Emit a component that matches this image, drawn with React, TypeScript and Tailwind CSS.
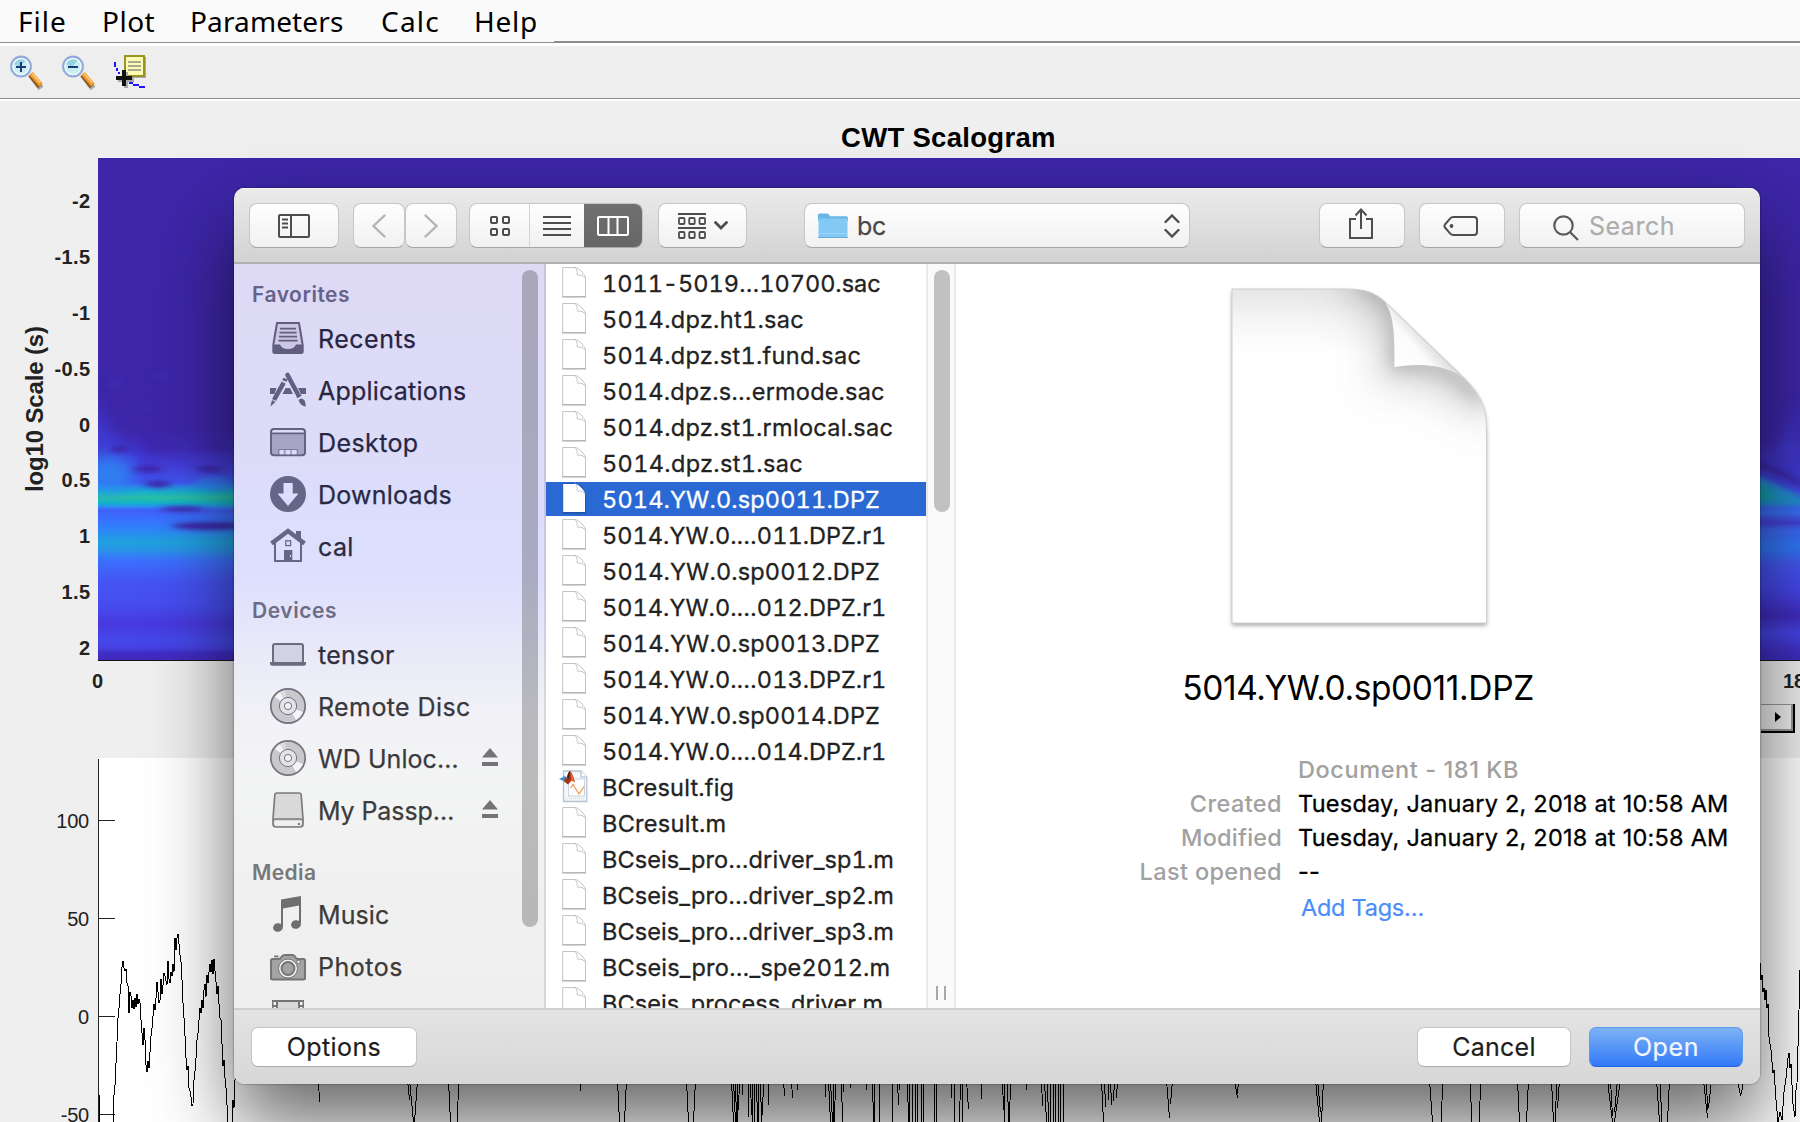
import React from 'react';

/* ---------- figure window (background) ---------- */

const menus = [
  { label: 'File', cls: 'w-[84px] tracking-[1px]' },
  { label: 'Plot', cls: 'w-[88px] tracking-[0.5px]' },
  { label: 'Parameters', cls: 'w-[191px] tracking-[0.13px]' },
  { label: 'Calc', cls: 'w-[93px] tracking-[1.2px]' },
  { label: 'Help', cls: 'tracking-[0.75px]' },
];

function Magnifier({ plus }: { plus?: boolean }) {
  return (
    <svg width="34" height="38" viewBox="0 0 34 38">
      <path d="M21 20 L31 33.500" stroke="#a9a9b5" strokeWidth="6" />
      <path d="M20.500 19.500 L30 31.500" stroke="#8a5a20" strokeWidth="5.500" />
      <path d="M21 18.500 L31 30" stroke="#f39a2c" strokeWidth="4.500" />
      <path d="M22 18.500 L30 27.500" stroke="#fbc980" strokeWidth="1.500" />
      <circle cx="11" cy="11.500" r="9.800" fill="#c9edf3" stroke="#93a9dc" strokeWidth="2.200" />
      <path d="M4 9 A8 8 0 0 1 16 5 L10 12 Z" fill="#93d3e2" />
      <circle cx="11" cy="11.500" r="8" fill="none" stroke="#ecfafc" strokeWidth="1.400" />
      <path d="M6 12 H16" stroke="#1c3a78" strokeWidth="2" />
      {plus && <path d="M11 7 V17" stroke="#1c3a78" strokeWidth="2" />}
    </svg>
  );
}

function DataCursor() {
  return (
    <svg width="34" height="38" viewBox="0 0 34 38" shapeRendering="crispEdges">
      <path d="M12 2 H32 V23 H12 Z" fill="#a9a9b0" />
      <path d="M1 7 V12 M3 13 V16 M5 17 V19" stroke="#1616ff" strokeWidth="2" />
      <path d="M15 28 H19 M19 30 H25 M25 32 H31" stroke="#1616ff" strokeWidth="2" />
      <rect x="11" y="1" width="19" height="20" fill="#fbfbb4" stroke="#9a9222" strokeWidth="2" />
      <path d="M14 6.500 H27 M14 10.500 H27 M14 14.500 H27" stroke="#a9a990" strokeWidth="2" />
      <path d="M4 25 H20 M12 17 V33" stroke="#aaa" strokeWidth="4" />
      <path d="M2 23 H18 M10 15 V31" stroke="#111" strokeWidth="4" />
    </svg>
  );
}

const yTicks: [string, number][] = [
  ['-2', 201], ['-1.5', 257], ['-1', 313], ['-0.5', 369], ['0', 425],
  ['0.5', 480], ['1', 536], ['1.5', 592], ['2', 648],
];

function Scalogram() {
  return (
    <svg className="block" width="1800" height="603" viewBox="0 101 1800 603" fontFamily='"Liberation Sans", Arial, sans-serif' fontWeight="700">
      <defs>
        <linearGradient id="spectrum" x1="0" y1="158" x2="0" y2="661" gradientUnits="userSpaceOnUse">
          <stop offset="0" stopColor="#3d26a8" />
          <stop offset="0.540" stopColor="#3d26a8" />
          <stop offset="0.580" stopColor="#3f2cba" />
          <stop offset="0.615" stopColor="#4440dc" />
          <stop offset="0.645" stopColor="#3f58f2" />
          <stop offset="0.654" stopColor="#2a8ce8" />
          <stop offset="0.664" stopColor="#18b0cc" />
          <stop offset="0.675" stopColor="#2abfa6" />
          <stop offset="0.686" stopColor="#14b4c8" />
          <stop offset="0.693" stopColor="#2a90f0" />
          <stop offset="0.700" stopColor="#4060f8" />
          <stop offset="0.720" stopColor="#3872ff" />
          <stop offset="0.740" stopColor="#2e86f8" />
          <stop offset="0.763" stopColor="#1fa2dd" />
          <stop offset="0.780" stopColor="#2993e8" />
          <stop offset="0.800" stopColor="#3a70fc" />
          <stop offset="0.840" stopColor="#4455f4" />
          <stop offset="0.890" stopColor="#464cee" />
          <stop offset="0.925" stopColor="#4739de" />
          <stop offset="0.960" stopColor="#4548ea" />
          <stop offset="0.975" stopColor="#453fe0" />
          <stop offset="0.985" stopColor="#402cc4" />
          <stop offset="1" stopColor="#4029bc" />
        </linearGradient>
        <linearGradient id="spectrumRight" x1="0" y1="158" x2="0" y2="661" gradientUnits="userSpaceOnUse">
          <stop offset="0" stopColor="#3d26a8" />
          <stop offset="0.560" stopColor="#3d26a8" />
          <stop offset="0.620" stopColor="#4136cc" />
          <stop offset="0.680" stopColor="#3f50f0" />
          <stop offset="0.705" stopColor="#3970f6" />
          <stop offset="0.725" stopColor="#4440d6" />
          <stop offset="0.740" stopColor="#3b68f4" />
          <stop offset="0.775" stopColor="#3078f8" />
          <stop offset="0.810" stopColor="#4455f0" />
          <stop offset="0.860" stopColor="#4545e8" />
          <stop offset="0.910" stopColor="#402bbe" />
          <stop offset="0.945" stopColor="#4644e6" />
          <stop offset="0.980" stopColor="#402fc4" />
          <stop offset="1" stopColor="#3f2bbc" />
        </linearGradient>
        <filter id="b3" x="-60%" y="-100%" width="220%" height="300%"><feGaussianBlur stdDeviation="5 2.200" /></filter>
        <filter id="b8" x="-60%" y="-60%" width="220%" height="220%"><feGaussianBlur stdDeviation="8" /></filter>
        <clipPath id="plotArea"><rect x="98" y="158" width="1702" height="502" /></clipPath>
      </defs>
      <text x="841" y="147" fontSize="27.500" letterSpacing="0.300">CWT Scalogram</text>
      <text transform="translate(42.500 492) rotate(-90)" fontSize="24" letterSpacing="-0.150" fill="#222">log10 Scale (s)</text>
      <g fontSize="20" textAnchor="end" fill="#222" letterSpacing="0.400">
        {yTicks.map(([t, y]) => <text key={t} x="90.500" y={y + 7}>{t}</text>)}
      </g>
      <text x="97.500" y="688" fontSize="20" textAnchor="middle" fill="#222">0</text>
      <text x="1783" y="688" fontSize="20" fill="#222">180</text>
      <g clipPath="url(#plotArea)">
        <rect x="98" y="158" width="902" height="502" fill="url(#spectrum)" />
        <rect x="1000" y="158" width="800" height="502" fill="url(#spectrumRight)" />
        <path d="M90 390 Q105 440 140 452 V475 H90 Z" fill="#4048ee" opacity="0.600" filter="url(#b8)" />
        <ellipse cx="108" cy="474" rx="26" ry="18" fill="#2b8cf2" opacity="0.800" filter="url(#b8)" />
        <ellipse cx="215" cy="484" rx="20" ry="7" fill="#2b86f0" opacity="0.600" filter="url(#b3)" />
        <g fill="#3e26a8" filter="url(#b3)">
          <ellipse cx="120" cy="449" rx="9" ry="4" />
          <ellipse cx="162" cy="447" rx="12" ry="4" />
          <ellipse cx="212" cy="446" rx="12" ry="4" />
          <ellipse cx="148" cy="469" rx="14" ry="3.500" />
          <ellipse cx="210" cy="469" rx="14" ry="3.500" />
          <ellipse cx="158" cy="484" rx="13" ry="3.500" />
          <ellipse cx="182" cy="509" rx="22" ry="2.500" />
          <ellipse cx="208" cy="526" rx="36" ry="4" />
        </g>
        <path d="M1745 470 Q1765 480 1805 498 V506 H1745 Z" fill="#228fd0" filter="url(#b3)" />
        <path d="M1750 482 Q1768 488 1776 494 V500 H1750 Z" fill="#189fb0" filter="url(#b3)" />
        <path d="M1785 440 L1800 400 V470 L1770 452 Z" fill="#4140dc" opacity="0.700" filter="url(#b8)" />
        <path d="M1752 462 Q1775 468 1804 486" stroke="#3a25a4" strokeWidth="6" fill="none" filter="url(#b3)" />
        <g fill="#4133c0" opacity="0.500" filter="url(#b3)">
          <ellipse cx="116" cy="383" rx="4" ry="7" />
          <ellipse cx="162" cy="376" rx="5" ry="4" />
          <ellipse cx="146" cy="407" rx="3" ry="5" />
        </g>
      </g>
      <rect x="98" y="660" width="1702" height="1" fill="#151515" />
    </svg>
  );
}

const leftTrace =
  '99,1095 100,1122 113,1122 114,1095 115,1085 117,1042 118,1018 119,1008 120,994 121,984 122,967 123,961 124,968 125,971 126,969 127,983 128,986 129,1013 130,992 131,996 132,1008 133,1000 134,1009 135,998 136,1007 137,994 138,1004 139,999 140,1003 141,1020 142,1033 143,1045 144,1028 145,1040 146,1065 147,1072 148,1061 149,1068 150,1052 151,1036 152,1028 153,1016 154,1004 155,1010 156,998 157,982 158,992 159,1003 160,1000 161,979 162,994 163,985 164,973 165,976 166,981 167,985 168,961 169,979 170,983 171,972 172,976 173,964 174,972 175,938 176,950 177,938 178,934 179,944 180,955 181,962 182,980 183,1003 184,1018 185,1036 186,1058 187,1070 188,1066 189,1088 190,1091 191,1097 192,1106 193,1104 194,1080 195,1071 196,1058 197,1040 198,1033 199,1020 200,1008 201,1013 202,1000 203,1008 204,990 205,984 206,997 207,975 208,983 209,972 210,964 211,972 212,960 213,974 214,959 215,971 216,982 217,994 218,986 219,1004 220,1018 221,1020 222,1044 223,1066 224,1060 225,1078 226,1088 227,1105 228,1122 232,1122 233,1100 234,1108 235,1080 236,1060';

const rightTrace =
  '1760,963 1761,980 1762,975 1763,992 1764,988 1765,1000 1766,990 1767,1008 1768,1004 1769,1037 1771,1050 1773,1073 1774,1070 1776,1100 1778,1122 1780,1112 1782,1120 1784,1092 1786,1078 1788,1058 1789,1053 1790,1068 1791,1064 1792,1085 1793,1104 1795,1117 1796,1090 1797,1083 1799,1010 1800,970';

/* [x at the top edge, x at the bottom end, bottom y] of each visible excursion */
const spikes: [number, number, number][] = [
  [318, 319, 1102], [407, 409, 1100], [409, 413, 1122], [417, 414, 1122], [448, 450, 1122], [458, 457, 1122],
  [580, 580, 1091], [617, 619, 1122], [626, 624, 1122], [686, 688, 1122], [695, 693, 1122],
  [731, 733, 1122], [733, 735, 1122], [735, 736, 1122], [737, 737, 1122], [739, 738, 1110], [742, 742, 1095], [748, 748, 1117],
  [750, 751, 1115], [752, 752, 1122], [754, 754, 1122], [756, 757, 1122], [758, 758, 1122], [760, 761, 1122], [763, 762, 1115],
  [768, 768, 1105], [783, 784, 1096], [791, 792, 1098], [797, 797, 1090], [825, 825, 1097], [828, 830, 1122], [830, 832, 1122], [833, 833, 1122], [835, 834, 1122],
  [841, 842, 1122], [843, 843, 1092], [850, 850, 1088], [866, 866, 1090], [872, 873, 1122], [874, 874, 1122], [879, 879, 1122], [892, 892, 1122], [897, 898, 1105],
  [899, 899, 1090], [907, 908, 1122], [909, 909, 1122], [912, 912, 1122], [915, 915, 1122], [917, 917, 1122], [921, 921, 1122], [923, 923, 1122],
  [934, 934, 1122], [936, 936, 1122], [951, 951, 1098], [954, 954, 1122], [960, 959, 1122], [962, 962, 1122], [966, 968, 1109], [981, 981, 1099],
  [1002, 1003, 1110], [1004, 1004, 1122], [1007, 1008, 1122], [1010, 1009, 1122], [1026, 1026, 1090], [1041, 1042, 1106], [1044, 1046, 1122], [1047, 1048, 1122], [1050, 1050, 1122],
  [1053, 1053, 1122], [1055, 1055, 1122], [1058, 1058, 1122], [1060, 1060, 1122], [1063, 1063, 1122],
  [1101, 1103, 1122], [1104, 1105, 1107], [1108, 1108, 1100], [1110, 1111, 1105], [1114, 1113, 1101], [1117, 1116, 1098],
  [1166, 1169, 1118], [1172, 1170, 1104], [1234, 1237, 1098], [1238, 1237, 1094], [1315, 1319, 1122], [1317, 1320, 1112], [1323, 1321, 1122],
  [1429, 1432, 1122], [1442, 1441, 1122], [1470, 1471, 1122], [1480, 1479, 1122], [1517, 1519, 1122], [1528, 1526, 1122],
  [1551, 1553, 1122], [1559, 1557, 1108], [1556, 1555, 1122], [1607, 1612, 1122], [1610, 1612, 1116], [1620, 1614, 1122], [1617, 1614, 1112],
  [1656, 1659, 1122], [1669, 1667, 1122], [1660, 1661, 1122], [1703, 1707, 1118], [1711, 1708, 1108], [1706, 1707, 1110], [1737, 1740, 1096], [1743, 1741, 1094],
];

const ampTicks: [string, number][] = [['100', 820], ['50', 918], ['0', 1016], ['-50', 1114]];

function Seismogram() {
  return (
    <svg className="block" width="1800" height="365" viewBox="0 757 1800 365" fontFamily='"Liberation Sans", Arial, sans-serif'>
      <rect x="98" y="758" width="1702" height="364" fill="#fff" />
      <g shapeRendering="crispEdges" fill="none" stroke="#000">
        <path d="M98.500 759 V1122" stroke="#222" />
        {ampTicks.map(([t, y]) => <path key={t} d={`M98 ${y + 0.5} H115`} stroke="#222" />)}
        <polyline points={leftTrace} />
        <polyline points={rightTrace} />
        {spikes.map(([a, b, y], i) => <path key={i} d={`M${a + 0.5} 1080 L${b + 0.5} ${y}`} />)}
      </g>
      <g fontSize="20" textAnchor="end" fill="#222" letterSpacing="-0.200">
        {ampTicks.map(([t, y]) => <text key={t} x="89" y={y + 7.5}>{t}</text>)}
      </g>
    </svg>
  );
}

function FigureWindow() {
  return (
    <div className="flex h-full w-full flex-col bg-[#efefef]">
      <div className="flex h-[42px] shrink-0 bg-[#fafafa] pl-[18px] font-['Noto_Sans',sans-serif] text-[28px] leading-[42px] text-black">
        {menus.map((m) => <span key={m.label} className={m.cls}>{m.label}</span>)}
      </div>
      <div className="flex h-px shrink-0 bg-[#8c8c8c]">
        <div className="-mt-px ml-[554px] h-0.5 grow bg-[#8c8c8c]" />
      </div>
      <div className="h-[3px] shrink-0 bg-white" />
      <div className="flex h-[52px] shrink-0 gap-[18px] bg-[#eeeeee] pl-[10px] pt-[9px]">
        <Magnifier plus />
        <Magnifier />
        <DataCursor />
      </div>
      <div className="h-px shrink-0 bg-[#8c8c8c]" />
      <div className="h-0.5 shrink-0 bg-white" />
      <Scalogram />
      <div className="flex h-[53px] shrink-0 justify-end pr-[5px]">
        <div className="flex h-[29px] w-[34px] items-center justify-center border-b-2 border-r-2 border-black bg-[#f0f0f0] shadow-[inset_-2px_-2px_0_#999,inset_0_1px_0_#999]">
          <div className="ml-0.5 h-0 w-0 -translate-y-px border-y-[5px] border-l-[6px] border-y-transparent border-l-black" />
        </div>
      </div>
      <Seismogram />
    </div>
  );
}

/* ---------- sidebar icons ---------- */

type IconProps = { c: string };

function Svg({ children }: { children: React.ReactNode }) {
  return <svg className="shrink-0 overflow-visible" width="36" height="36" viewBox="0 0 36 36">{children}</svg>;
}
const Recents = ({ c }: IconProps) => (
  <Svg>
    <path d="M7 2 H29 L32.700 24 V30.500 Q32.700 32 31 32 H5 Q3.300 32 3.300 30.500 V24 Z" fill={c} fillOpacity="0.150" stroke={c} strokeWidth="2" strokeLinejoin="round" />
    <path d="M3 23.500 H10 Q12 28 18 28 Q24 28 26 23.500 H33 V31 Q33 32 31 32 H5 Q3 32 3 31 Z" fill={c} />
    <path d="M10 7.700 H26 M9.500 11.700 H26.500 M9 15.700 H27 M8.500 19.700 H27.500" stroke={c} strokeWidth="1.800" />
  </Svg>
);
const Applications = ({ c }: IconProps) => (
  <Svg>
    <path d="M0 15 H6.500 L4.500 21 H0 Z M12.500 21 L15.500 15 H20 L23 21 Z M28 15 H36 V21 H31 Z" fill={c} />
    <path d="M17.500 2 L27.500 20.500" stroke={c} strokeWidth="4.600" strokeLinecap="round" />
    <path d="M28 21.500 L29.500 24" stroke={c} strokeWidth="5" />
    <path d="M28.500 27 Q32 23.500 35 28 Q35.500 31 35.800 33.500 Q30.500 33 28.500 27 Z" fill={c} />
    <path d="M13.700 9.700 L4 27" stroke={c} strokeWidth="4.600" />
    <path d="M15.500 5.500 L14.500 8" stroke={c} strokeWidth="4.600" />
    <path d="M2 27 L5.500 29 L0.300 33.500 Z" fill={c} />
  </Svg>
);
const Desktop = ({ c }: IconProps) => (
  <Svg>
    <rect x="1" y="4" width="34" height="26.300" rx="3" fill="none" stroke={c} strokeWidth="2" />
    <path d="M1.500 8.500 H34.500 V27 Q34.500 29.500 32 29.500 H4 Q1.500 29.500 1.500 27 Z" fill={c} fillOpacity="0.450" />
    <path d="M1 8.300 H35" stroke={c} strokeWidth="1.700" />
    <rect x="9.500" y="25" width="4" height="4.300" fill="#dcdcfa" /><rect x="15.800" y="25" width="4.400" height="4.300" fill="#dcdcfa" /><rect x="22" y="25" width="4.500" height="4.300" fill="#dcdcfa" />
    <path d="M8.700 30 V24.500 H27.500 V30" fill="none" stroke={c} strokeOpacity="0.600" strokeWidth="1" />
  </Svg>
);
const Downloads = ({ c }: IconProps) => (
  <Svg>
    <circle cx="18" cy="17" r="18" fill={c} />
    <path d="M13.500 6 H22.700 V16.500 H28.500 L18 29 L7.500 16.500 H13.500 Z" fill="#dcdefd" />
  </Svg>
);
const Home = ({ c }: IconProps) => (
  <Svg>
    <path d="M5 13 V32 H31 V13" fill="none" stroke={c} strokeWidth="2" />
    <path d="M26 2 H31 V12 L26 8 Z" fill={c} />
    <path d="M1.500 14.500 L18 2 L34.500 14.500" fill="none" stroke={c} strokeWidth="4.500" />
    <rect x="15.800" y="11.800" width="4.800" height="4.800" fill="none" stroke={c} strokeWidth="1.300" />
    <rect x="14" y="21" width="8.300" height="12" fill={c} />
    <rect x="20" y="26" width="1" height="2" fill="#dcdefd" />
  </Svg>
);
const Laptop = ({ c }: IconProps) => (
  <Svg>
    <rect x="3" y="7" width="30" height="19" rx="2" fill={c} fillOpacity="0.180" stroke={c} strokeWidth="2" />
    <path d="M0 25 H36 V27 Q36 28.700 33.500 28.700 H2.500 Q0 28.700 0 27 Z" fill={c} />
  </Svg>
);
const Disc = ({ c }: IconProps) => (
  <Svg>
    <circle cx="18" cy="17" r="17.200" fill="#c9c9cd" stroke={c} strokeWidth="1.700" />
    <path d="M18 17 L5 8 A16 16 0 0 1 10 3 Z" fill="#f4f4f8" />
    <path d="M18 17 L33 23 A16 16 0 0 1 26 31 Z" fill="#f4f4f8" />
    <path d="M18 17 L10 3 A16 16 0 0 1 15 1.300 Z" fill="#dcdce0" />
    <circle cx="18" cy="17" r="8.600" fill="#e3e3e8" stroke={c} strokeWidth="1" />
    <circle cx="18" cy="17" r="3.600" fill="#f2f2f6" stroke={c} strokeWidth="1" />
  </Svg>
);
const Drive = ({ c }: IconProps) => (
  <Svg>
    <path d="M7 0 H29 Q31 0 31.200 2 L33 26 V31 Q33 34 30 34 H6 Q3 34 3 31 V26 L4.800 2 Q5 0 7 0 Z" fill="#d9d9da" stroke={c} strokeWidth="1.700" />
    <path d="M3.500 27.500 Q4 26 6 26 H30 Q32 26 32.500 27.500" fill="none" stroke={c} strokeWidth="1.300" />
    <path d="M4.500 28 H31.500 V31 Q31.500 32.800 29.500 32.800 H6.500 Q4.500 32.800 4.500 31 Z" fill="#efefef" />
    <rect x="28" y="30" width="2" height="2" fill={c} />
  </Svg>
);
const Music = ({ c }: IconProps) => (
  <Svg>
    <path d="M11 2.500 L31 -1 V26 H29 V8.500 L13 11.500 V30 H11 Z" fill={c} />
    <ellipse cx="8" cy="30.500" rx="5" ry="4.300" transform="rotate(-15 8 30.500)" fill={c} />
    <ellipse cx="26" cy="27.500" rx="5" ry="4.300" transform="rotate(-15 26 27.500)" fill={c} />
  </Svg>
);
const Camera = ({ c }: IconProps) => (
  <Svg>
    <path d="M2 10 H8.500 Q10.500 10 11.500 8 Q12.500 6 14.500 6 H22.500 Q24.500 6 25.300 8 Q26 10 28 10 H33.500 Q35 10 35 11.500 V29 Q35 30.500 33.500 30.500 H2.500 Q1 30.500 1 29 V11.500 Q1 10 2.500 10 Z" fill="#a3a3a4" stroke={c} strokeWidth="2" />
    <rect x="4" y="6.500" width="4.500" height="1.800" fill={c} />
    <circle cx="18" cy="19.500" r="9.500" fill="#f0f0f0" stroke={c} strokeWidth="1" />
    <circle cx="18" cy="19.500" r="6.400" fill="#a3a3a4" stroke={c} strokeWidth="2" />
    <circle cx="28.500" cy="13" r="1.800" fill="#eee" stroke={c} strokeWidth="1" />
  </Svg>
);
const Film = ({ c }: IconProps) => (
  <Svg>
    <rect x="2" y="-1" width="32" height="34" fill={c} />
    <rect x="8" y="1" width="20" height="14" fill="#d9d9da" />
    <path d="M3.500 1 H6 V4 H3.500 Z M30 1 H32.500 V4 H30 Z M3.500 6 H6 V10 H3.500 Z M30 6 H32.500 V10 H30 Z" fill="#efefef" />
  </Svg>
);

type Item = { label: string; icon: React.FC<IconProps>; color: string; text: string; eject?: boolean };
const groups: { title: string; head: string; items: Item[] }[] = [
  {
    title: 'Favorites', head: 'h-[49px] pt-[13px] tracking-[0.5px] text-[#66628a]',
    items: [
      { label: 'Recents', icon: Recents, color: '#625e80', text: 'tracking-[0.5px] text-[#272543]' },
      { label: 'Applications', icon: Applications, color: '#625f82', text: 'tracking-[0.22px] text-[#272543]' },
      { label: 'Desktop', icon: Desktop, color: '#636284', text: 'tracking-[0.4px] text-[#272743]' },
      { label: 'Downloads', icon: Downloads, color: '#646687', text: 'tracking-[0.25px] text-[#282a45]' },
      { label: 'cal', icon: Home, color: '#646686', text: 'tracking-[0.4px] text-[#282a44]' },
    ],
  },
  {
    title: 'Devices', head: 'h-[56px] pt-[20px] tracking-[0.55px] text-[#6b6c86]',
    items: [
      { label: 'tensor', icon: Laptop, color: '#6b6b80', text: 'tracking-[0.3px] text-[#2f3040]' },
      { label: 'Remote Disc', icon: Disc, color: '#717180', text: 'tracking-[0.4px] text-[#38383f]' },
      { label: 'WD Unloc…', icon: Disc, color: '#747479', text: 'tracking-[0.07px] text-[#3a3a3e]', eject: true },
      { label: 'My Passp…', icon: Drive, color: '#7a7a7b', text: 'tracking-[-0.1px] text-[#3c3c3d]', eject: true },
    ],
  },
  {
    title: 'Media', head: 'h-[52px] pt-[18px] tracking-[0.4px] text-[#787878]',
    items: [
      { label: 'Music', icon: Music, color: '#6f6f6f', text: 'tracking-[0.1px] text-[#3b3b3b]' },
      { label: 'Photos', icon: Camera, color: '#757575', text: 'tracking-[0.5px] text-[#3b3b3b]' },
      { label: '', icon: Film, color: '#757575', text: 'text-[#3b3b3b]' },
    ],
  },
];

function Sidebar() {
  return (
    <div className="flex h-full w-[312px] shrink-0 overflow-hidden border-r-2 border-black/10 bg-[linear-gradient(180deg,#dedaf5_0%,#dcdbf8_22%,#dcdefd_36%,#dddffd_42%,#e2e3fb_46%,#ebebf8_54%,#f2f2f6_62%,#f3f4f4_70%,#f0f0f0_85%,#efefef_100%)]">
      <div className="w-[288px]">
        {groups.map((g) => (
          <div key={g.title}>
            <div className={`pl-[18px] text-[21px] font-semibold leading-[36px] ${g.head}`}>{g.title}</div>
            {g.items.map(({ label, icon: Icon, color, text, eject }) => (
              <div key={label} className="flex h-[52px] items-center pl-9">
                <Icon c={color} />
                <span className={`ml-[12px] w-[164px] whitespace-nowrap text-[25px] leading-[52px] [-webkit-text-stroke:0.25px] ${text}`}>{label}</span>
                {eject && (
                  <svg className="-mt-1" width="16" height="18" viewBox="0 0 16 18">
                    <path d="M8 0 L16 9.500 H0 Z M0 14 H16 V18 H0 Z" fill="#747476" />
                  </svg>
                )}
              </div>
            ))}
          </div>
        ))}
      </div>
      <div className="mt-[6px] h-[657px] w-4 rounded-full bg-black/[0.23]" />
    </div>
  );
}

/* ---------- file column ---------- */

const files: [string, string][] = [
  ['1011-5019…10700.sac', 'tracking-[-0.02px]'],
  ['5014.dpz.ht1.sac', 'tracking-[0.3px]'],
  ['5014.dpz.st1.fund.sac', 'tracking-[0.3px]'],
  ['5014.dpz.s…ermode.sac', 'tracking-[0.19px]'],
  ['5014.dpz.st1.rmlocal.sac', 'tracking-[0.3px]'],
  ['5014.dpz.st1.sac', 'tracking-[0.33px]'],
  ['5014.YW.0.sp0011.DPZ', 'tracking-[0.15px]'],
  ['5014.YW.0.…011.DPZ.r1', 'tracking-[0.03px]'],
  ['5014.YW.0.sp0012.DPZ', 'tracking-[0.15px]'],
  ['5014.YW.0.…012.DPZ.r1', 'tracking-[0.03px]'],
  ['5014.YW.0.sp0013.DPZ', 'tracking-[0.15px]'],
  ['5014.YW.0.…013.DPZ.r1', 'tracking-[0.03px]'],
  ['5014.YW.0.sp0014.DPZ', 'tracking-[0.15px]'],
  ['5014.YW.0.…014.DPZ.r1', 'tracking-[0.03px]'],
  ['BCresult.fig', 'tracking-[0.2px]'],
  ['BCresult.m', 'tracking-[0.28px]'],
  ['BCseis_pro…driver_sp1.m', 'tracking-[0.1px]'],
  ['BCseis_pro…driver_sp2.m', 'tracking-[0.1px]'],
  ['BCseis_pro…driver_sp3.m', 'tracking-[0.1px]'],
  ['BCseis_pro…_spe2012.m', 'tracking-[0.18px]'],
  ['BCseis_process_driver.m', 'tracking-[0.08px]'],
];

function FileIcon({ selected }: { selected: boolean }) {
  const line = selected ? '#2458b0' : '#c4c4c4';
  return (
    <svg className="shrink-0" width="30" height="34" viewBox="0 0 30 34">
      <path d="M3.700 1.500 H16 Q19 1.800 21 4 L24 7 Q26.500 9.500 26.500 13 V30.500 H3.700 Z" fill="#fff" stroke={line} strokeWidth="1" />
      <path d="M3.200 31 H27" stroke={selected ? '#1d4c9e' : '#a9a9a9'} strokeWidth="1" />
      <path d="M16 1.500 Q18.500 3 18.300 9 Q24 8.500 26.300 12" fill="none" stroke={selected ? '#c3d0e6' : '#c6c6c6'} strokeWidth="1" />
    </svg>
  );
}

function FigIcon() {
  return (
    <svg className="shrink-0 overflow-visible" width="30" height="34" viewBox="0 0 30 34">
      <path d="M4.500 1 H22 L27.800 7 V31.500 H4.500 Z" fill="#f3f6fa" stroke="#b7c4d8" strokeWidth="1.300" />
      <path d="M22 1 V7 H27.800" fill="#fff" stroke="#a3b5d0" strokeWidth="1" />
      <rect x="9.500" y="9" width="16" height="17" fill="#fff" stroke="#ccd4de" strokeWidth="1" />
      <path d="M11.500 18 L14 14.500 L20 24 L25 16.500" fill="none" stroke="#f29440" strokeWidth="1.200" />
      <path d="M6 28.500 H26" stroke="#d8dee8" strokeWidth="1.500" strokeDasharray="1 1" />
      <path d="M0 9 L6 6 L8 8 L4.500 11 Z" fill="#3d8fd0" />
      <path d="M4.500 11 L8 7 Q9.500 1 11 1 Q13 2 16 12 L12.500 10.500 L9 14.500 Z" fill="#a8321a" />
      <path d="M11 1 Q12.500 3 16 12 L12.500 10.500 Z" fill="#e8642a" />
      <path d="M8 7 Q9.500 2 11 1 L10 9 Z" fill="#45201c" />
    </svg>
  );
}

function FileColumn() {
  return (
    <div className="h-full w-[380px] shrink-0 overflow-hidden bg-white pt-0.5">
      {files.map(([name, cls], i) => {
        const selected = i === 6;
        return (
          <div key={name} className={`mb-0.5 flex h-[34px] items-center pl-[13px] ${selected ? 'bg-[#2a69d3] text-white' : 'text-[#222]'}`}>
            {name.endsWith('.fig') ? <FigIcon /> : <FileIcon selected={selected} />}
            <span className={`ml-[13px] whitespace-nowrap pt-0.5 text-[23.5px] leading-[34px] tabular-nums [-webkit-text-stroke:0.3px] ${cls}`}>{name}</span>
          </div>
        );
      })}
    </div>
  );
}

function ColumnScroller() {
  return (
    <div className="flex h-full w-[30px] shrink-0 flex-col items-center justify-between border-x-2 border-x-[#e9e9e9] bg-[#fafafa] pb-2 pt-[6px]">
      <div className="ml-0.5 h-[242px] w-4 rounded-full bg-[#c1c1c1]" />
      <div className="flex h-[14px] w-[10px] border-x-2 border-[#a8a8a8]" />
    </div>
  );
}

/* ---------- preview ---------- */

function DocumentArt() {
  const page = 'M12 9 H124 C145 9 155 12 166 23 L246 100 C262 116 266.500 130 266.500 152 V343 H12 Z';
  return (
    <svg className="shrink-0" width="280" height="366" viewBox="0 0 280 366">
      <defs>
        <clipPath id="pageClip"><path d={page} /></clipPath>
        <linearGradient id="topShade" x1="0" y1="9" x2="0" y2="75" gradientUnits="userSpaceOnUse">
          <stop offset="0" stopColor="#e6e6e6" /><stop offset="0.500" stopColor="#f6f6f6" /><stop offset="1" stopColor="#fff" />
        </linearGradient>
        <linearGradient id="flap" x1="176" y1="84" x2="208" y2="56" gradientUnits="userSpaceOnUse">
          <stop offset="0" stopColor="#fff" /><stop offset="0.600" stopColor="#fbfbfb" /><stop offset="1" stopColor="#d8d8d8" />
        </linearGradient>
        <filter id="soft" x="-60%" y="-60%" width="220%" height="220%"><feGaussianBlur stdDeviation="9" /></filter>
        <filter id="softer" x="-60%" y="-60%" width="220%" height="220%"><feGaussianBlur stdDeviation="22" /></filter>
        <filter id="drop" x="-10%" y="-10%" width="120%" height="120%">
          <feDropShadow dx="0" dy="2.500" stdDeviation="2" floodColor="#000" floodOpacity="0.350" />
        </filter>
      </defs>
      <path d={page} fill="#fff" filter="url(#drop)" />
      <g clipPath="url(#pageClip)">
        <rect x="12" y="9" width="180" height="70" fill="url(#topShade)" />
        <path d="M130 0 C176 12 184 40 178 84 C215 78 245 92 268 130" fill="none" stroke="#777" strokeOpacity="0.400" strokeWidth="34" filter="url(#softer)" />
        <path d="M134 0 C174 12 180 40 177 84 C212 80 240 92 262 122" fill="none" stroke="#777" strokeOpacity="0.550" strokeWidth="10" filter="url(#soft)" />
      </g>
      <path d={page} fill="none" stroke="#cfcfcf" strokeWidth="1" />
      <path d="M164 21 C172 32 175 44 174.500 87 C205 82 232 86 247 101 Z" fill="url(#flap)" />
      <path d="M164 21 L247 101" stroke="#cacaca" strokeWidth="1" />
    </svg>
  );
}

const details = [
  ['', 'Document - 181 KB', '', 'tracking-[0.58px] font-medium text-[#a1a1a1]'],
  ['Created', 'Tuesday, January 2, 2018 at 10:58 AM', 'tracking-[0.4px]', 'tracking-[0.24px] text-black [-webkit-text-stroke:0.3px]'],
  ['Modified', 'Tuesday, January 2, 2018 at 10:58 AM', 'tracking-[0.2px]', 'tracking-[0.24px] text-black [-webkit-text-stroke:0.3px]'],
  ['Last opened', '--', 'tracking-[0.35px]', 'tracking-[0.24px] text-black [-webkit-text-stroke:0.3px]'],
];

function Preview() {
  return (
    <div className="flex h-full grow flex-col items-start bg-white pt-4">
      <div className="pl-[264px]"><DocumentArt /></div>
      <div className="mt-[15px] w-full text-center text-[33.5px] leading-[54px] tracking-[-0.39px] text-black">5014.YW.0.sp0011.DPZ</div>
      <div className="mt-[38px] grid grid-cols-[326px_1fr] gap-x-[16px] whitespace-nowrap text-[23.5px] leading-[34px]">
        {details.map(([k, v, kc, vc], i) => (
          <React.Fragment key={i}>
            <div className={`text-right font-medium text-[#a1a1a1] ${kc}`}>{k}</div>
            <div className={vc}>{v}</div>
          </React.Fragment>
        ))}
      </div>
      <div className="mt-[2px] pl-[345px] text-[23.5px] leading-[34px] tracking-[-0.26px] text-[#4a8cf8] [-webkit-text-stroke:0.2px]">Add Tags…</div>
    </div>
  );
}

/* ---------- toolbar ---------- */

const btn = 'flex h-[45px] shrink-0 items-center rounded-[8px] border border-[#c6c6c6] border-b-[#a6a6a6] bg-[linear-gradient(180deg,#fefefe,#f1f1f1)]';

function Toolbar() {
  return (
    <div className="flex h-[76px] shrink-0 items-start border-b-2 border-[#b0b0b0] bg-[linear-gradient(180deg,#ebebeb,#d2d2d3)] pl-[15px] pt-[15px] shadow-[inset_0_1px_0_#f6f6f6]">
      <div className={`${btn} w-[90px] justify-center`}>
        <svg width="32" height="24" viewBox="0 0 32 24" fill="none" stroke="#4d4d4d" strokeWidth="2">
          <rect x="1" y="1" width="30" height="22" rx="1" />
          <path d="M13 1 V23" /><path d="M4 5.500 H10 M4 9.500 H10 M4 13.500 H10" strokeWidth="1.800" />
        </svg>
      </div>
      <div className={`${btn} ml-[14px] w-[52px] justify-center`}>
        <svg width="14" height="24" viewBox="0 0 14 24" fill="none" stroke="#b4b4b4" strokeWidth="2.400" strokeLinecap="round"><path d="M12.500 1.500 L1.500 12 L12.500 22.500" /></svg>
      </div>
      <div className={`${btn} w-[52px] justify-center`}>
        <svg width="14" height="24" viewBox="0 0 14 24" fill="none" stroke="#b4b4b4" strokeWidth="2.400" strokeLinecap="round"><path d="M1.500 1.500 L12.500 12 L1.500 22.500" /></svg>
      </div>
      <div className={`${btn} ml-3 w-[174px] overflow-hidden`}>
        <div className="flex h-full w-[60px] items-center justify-center border-r border-[#d4d4d4]">
          <svg width="20" height="20" viewBox="0 0 20 20" fill="none" stroke="#4d4d4d" strokeWidth="2">
            <rect x="1" y="1" width="6" height="6" rx="1" /><rect x="13" y="1" width="6" height="6" rx="1" />
            <rect x="1" y="13" width="6" height="6" rx="1" /><rect x="13" y="13" width="6" height="6" rx="1" />
          </svg>
        </div>
        <div className="flex h-full w-[54px] items-center justify-center">
          <svg width="28" height="22" viewBox="0 0 28 22" stroke="#4d4d4d" strokeWidth="2"><path d="M0 2 H28 M0 8 H28 M0 14 H28 M0 20 H28" /></svg>
        </div>
        <div className="-my-px -mr-px flex h-[45px] w-[59px] items-center justify-center bg-[linear-gradient(180deg,#707070,#666)] pr-0.5">
          <svg width="32" height="20" viewBox="0 0 32 20" fill="none" stroke="#fff" strokeWidth="2"><rect x="1" y="1" width="30" height="18" rx="1" /><path d="M11.500 1 V19 M20.500 1 V19" /></svg>
        </div>
      </div>
      <div className={`${btn} ml-[15px] w-[89px] justify-center gap-[8px]`}>
        <svg width="28" height="26" viewBox="0 0 28 26" fill="none" stroke="#4d4d4d" strokeWidth="2">
          <path d="M0 1 H28 M0 15 H28" />
          <g strokeWidth="1.800">
            <rect x="1" y="5" width="5.500" height="6" rx="1" /><rect x="11.200" y="5" width="5.500" height="6" rx="1" /><rect x="21.500" y="5" width="5.500" height="6" rx="1" />
            <rect x="1" y="19" width="5.500" height="6" rx="1" /><rect x="11.200" y="19" width="5.500" height="6" rx="1" /><rect x="21.500" y="19" width="5.500" height="6" rx="1" />
          </g>
        </svg>
        <svg width="14" height="9" viewBox="0 0 14 9" fill="none" stroke="#4d4d4d" strokeWidth="2.800" strokeLinecap="round"><path d="M1.500 1.500 L7 7 L12.500 1.500" /></svg>
      </div>
      <div className={`${btn} ml-[57px] w-[386px] pl-[13px] pr-[9px]`}>
        <svg width="30" height="26" viewBox="0 0 30 26">
          <path d="M0 2 Q0 0.500 1.500 0.500 H9 Q10.500 0.500 11.300 2 L12 3.300 H28.500 Q30 3.300 30 5 V8 H0 Z" fill="#68b6e6" />
          <path d="M0.500 5.500 H29.500 V23 Q29.500 24.500 28 24.500 H2 Q0.500 24.500 0.500 23 Z" fill="#82c9f5" />
          <path d="M0 24.500 H30" stroke="#6aabd6" strokeWidth="1.200" /><path d="M1 20.500 H29" stroke="#9bd6fa" strokeWidth="1" />
        </svg>
        <span className="ml-[9px] grow pt-0.5 text-[25px] leading-[43px] tracking-[-0.3px] text-[#484848] [-webkit-text-stroke:0.25px]">bc</span>
        <svg width="16" height="24" viewBox="0 0 16 24" fill="none" stroke="#4d4d4d" strokeWidth="2.400" strokeLinecap="round"><path d="M1.500 8 L8 1.500 L14.500 8 M1.500 16 L8 22.500 L14.500 16" /></svg>
      </div>
      <div className={`${btn} ml-[129px] w-[86px] justify-center`}>
        <svg className="-mt-1 -translate-x-px" width="24" height="31" viewBox="0 0 24 31" fill="none" stroke="#4d4d4d" strokeWidth="2"><path d="M7 11 H1 V30 H23 V11 H17 M12 21 V2 M6.500 7.500 L12 1.500 L17.500 7.500" /></svg>
      </div>
      <div className={`${btn} ml-[14px] w-[86px] justify-center`}>
        <svg className="-translate-x-0.5" width="35" height="20" viewBox="0 0 35 20" fill="none" stroke="#4d4d4d" strokeWidth="2"><path d="M10.500 1 H31 Q34 1 34 4 V16 Q34 19 31 19 H10.500 Q8.500 19 7 17.300 L2 11.500 Q0.800 10 2 8.500 L7 2.700 Q8.500 1 10.500 1 Z" /><circle cx="8.500" cy="10" r="1.900" fill="#4d4d4d" stroke="none" /></svg>
      </div>
      <div className={`${btn} ml-[14px] w-[226px] pl-[33px]`}>
        <svg className="mt-1" width="26" height="26" viewBox="0 0 26 26" fill="none" stroke="#5a5a5a" strokeWidth="2.200"><circle cx="10.500" cy="10.500" r="9.200" /><path d="M17.200 17.200 L25 25" /></svg>
        <span className="ml-[10px] pt-0.5 text-[25px] leading-[43px] tracking-[0.5px] text-[#adadad] [-webkit-text-stroke:0.2px]">Search</span>
      </div>
    </div>
  );
}

/* ---------- dialog ---------- */

function OpenDialog() {
  return (
    <div className="absolute left-[234px] top-[188px] flex h-[896px] w-[1526px] flex-col overflow-hidden rounded-[10px] font-[Inter,sans-serif] shadow-[0_40px_80px_rgba(0,0,0,0.6),0_0_2px_rgba(0,0,0,0.6)]">
      <Toolbar />
      <div className="flex h-[744px] shrink-0">
        <Sidebar />
        <FileColumn />
        <ColumnScroller />
        <Preview />
      </div>
      <div className="flex grow items-start border-t-2 border-[#cfcfcf] bg-[linear-gradient(180deg,#e3e3e3,#d7d7d7)] pl-[17px] pt-[17px] text-[25px] leading-[38px] [-webkit-text-stroke:0.2px]">
        <button className="h-[40px] w-[166px] rounded-[7px] border border-[#c4c4c4] border-b-[#a9a9a9] bg-white tracking-[0.4px] text-[#1e1e1e]">Options</button>
        <button className="ml-[1000px] h-[40px] w-[154px] rounded-[7px] border border-[#c4c4c4] border-b-[#a9a9a9] bg-white tracking-[0.25px] text-[#1e1e1e]">Cancel</button>
        <button className="ml-[18px] h-[40px] w-[154px] rounded-[7px] border border-[#5c9bea] border-b-[#2062e8] bg-[linear-gradient(180deg,#7db2f4,#3279f8)] tracking-[0.6px] text-[#f2f6fe]">Open</button>
      </div>
    </div>
  );
}

export default function App() {
  return (
    <div className="relative h-[1122px] w-[1800px] overflow-hidden">
      <FigureWindow />
      <OpenDialog />
    </div>
  );
}
